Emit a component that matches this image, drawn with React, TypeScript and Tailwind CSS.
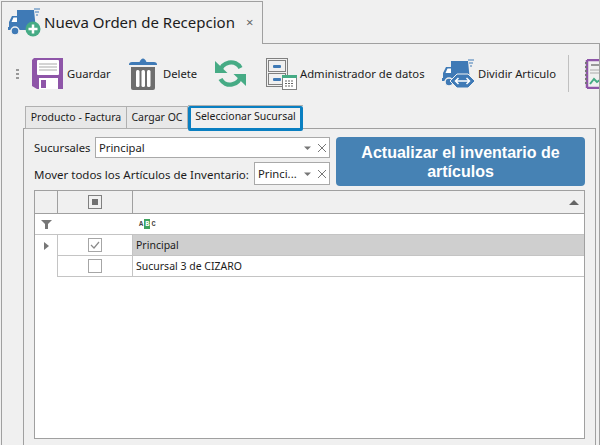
import { ReactNode } from "react";

const BLUE = "#3f7ab6";
const GREEN = "#46ab85";
const PURPLE = "#8e55a8";
const GREY = "#6e6e6e";

function TruckBody() {
  return (
    <>
      <path d="M9 3h17l2 20H1v-8l3-6h5z" fill={BLUE} />
      <path d="M3.500 15l2-4.500h3.500V15z" fill="#fff" />
      <rect x="0" y="20" width="27" height="3" fill={BLUE} />
      <circle cx="7" cy="24" r="4" fill={BLUE} stroke="#f0f0f0" strokeWidth="1.500" />
      <path d="M26 2h6M27 5h4M28 8h2" stroke={BLUE} strokeWidth="1" />
    </>
  );
}

function NewOrderIcon() {
  return (
    <svg width="33" height="30" viewBox="0 0 33 30" className="shrink-0">
      <TruckBody />
      <circle cx="25" cy="22" r="7.500" fill={GREEN} />
      <path d="M25 17.500v9M20.500 22h9" stroke="#fff" strokeWidth="2.500" />
    </svg>
  );
}

function SaveIcon() {
  return (
    <svg width="31" height="31" viewBox="0 0 31 31" className="shrink-0">
      <path d="M2 0h29v31H5l-5-3V2z" fill={PURPLE} />
      <rect x="5" y="2" width="22" height="15" rx="1" fill="#fff" />
      <path d="M7 6h18M7 9h18M7 12h18" stroke="#a9a9a9" strokeWidth="1" />
      <rect x="7" y="20" width="19" height="11" fill="#fff" />
      <rect x="9" y="22" width="5" height="8" fill={PURPLE} />
    </svg>
  );
}

function TrashIcon() {
  return (
    <svg width="28" height="32" viewBox="0 0 28 32" className="shrink-0">
      <path d="M0 6.500Q0 4 3 4h7.500Q12 0.500 14 0.500T17.500 4H25q3 0 3 2.500V7H0z" fill={BLUE} />
      <path d="M2 9h24v21q0 2-2 2H4q-2 0-2-2z" fill={GREY} />
      <rect x="7" y="12" width="3.500" height="17" rx="1.500" fill="#fff" />
      <rect x="12.500" y="12" width="3.500" height="17" rx="1.500" fill="#fff" />
      <rect x="18" y="12" width="3.500" height="17" rx="1.500" fill="#fff" />
    </svg>
  );
}

function RefreshIcon() {
  return (
    <svg width="31" height="29" viewBox="0 0 31 29" className="shrink-0">
      <path d="M5 13A11 11 0 0 1 25.500 9" fill="none" stroke={GREEN} strokeWidth="4.500" />
      <path d="M26 16A11 11 0 0 1 5.500 20" fill="none" stroke={GREEN} strokeWidth="4.500" />
      <path d="M0 14V2l12.500 12z" fill={GREEN} />
      <path d="M31 15v12L18.500 15z" fill={GREEN} />
    </svg>
  );
}

function DataAdminIcon() {
  return (
    <svg width="31" height="32" viewBox="0 0 31 32" className="shrink-0">
      <rect x="0.500" y="0.500" width="21" height="28" fill="#f0f0f0" stroke="#808080" />
      <rect x="2.500" y="2.500" width="17" height="11" fill="none" stroke="#808080" />
      <rect x="2.500" y="15.500" width="17" height="11" fill="none" stroke="#808080" />
      <rect x="7" y="7" width="8" height="3" rx="1" fill={BLUE} />
      <rect x="7" y="20" width="8" height="3" rx="1" fill={BLUE} />
      <rect x="16.500" y="17.500" width="14" height="14" fill="#fff" stroke="#808080" />
      <rect x="16" y="17" width="15" height="3" fill={GREEN} />
      <path d="M19 23h9M19 25.500h9M19 28h9" stroke="#666" strokeWidth="1.200" strokeDasharray="2 1" />
    </svg>
  );
}

function SplitTruckIcon() {
  return (
    <svg width="33" height="31" viewBox="0 0 33 31" className="shrink-0">
      <TruckBody />
      <path d="M8 23l7-7h11l7 7-7 7H15z" fill={BLUE} stroke="#f0f0f0" />
      <path d="M14 23h13M16.500 20l-3 3 3 3M24.500 20l3 3-3 3" fill="none" stroke="#fff" strokeWidth="1.500" />
    </svg>
  );
}

function ReportIcon() {
  return (
    <svg width="15" height="30" viewBox="0 0 15 30" className="shrink-0">
      <path d="M2 1h13M2 1v28M2 29h13" fill="none" stroke={PURPLE} strokeWidth="2.500" />
      <path d="M0 4h2M0 8h2M0 12h2M0 16h2M0 20h2M0 24h2" stroke="#777" strokeWidth="2" />
      <path d="M6 6h9" stroke="#999" strokeWidth="2" />
      <path d="M5 11h10M5 14h10" stroke="#aaa" strokeWidth="1" />
      <path d="M5 25l4-5 3 3 3-2" fill="none" stroke={GREEN} strokeWidth="2" />
    </svg>
  );
}

function ToolButton({ icon, label, className }: { icon: ReactNode; label?: string; className: string }) {
  return (
    <div className={`flex shrink-0 items-center ${className}`}>
      {icon}
      {label && <span className="pt-[2px] whitespace-nowrap text-[11.25px] text-[#1c1c1c]">{label}</span>}
    </div>
  );
}

function ComboBox({ value, className }: { value: string; className: string }) {
  return (
    <div className={`flex items-center border border-[#a9a9a9] bg-white pr-px pl-[3px] text-[11.25px] ${className}`}>
      <span className="min-w-0 flex-1 truncate pt-[2px]">{value}</span>
      <svg width="26" height="12" viewBox="0 0 26 12" className="shrink-0">
        <path d="M2 4.500h7L5.500 8z" fill="#777" />
        <path d="M16 2l8 8M24 2l-8 8" stroke="#777" strokeWidth="1" />
      </svg>
    </div>
  );
}

function CheckBox({ checked }: { checked?: boolean }) {
  return (
    <div className="flex h-[14px] w-[14px] items-center justify-center border border-[#a6a6a6] bg-white">
      {checked && (
        <svg width="10" height="10" viewBox="0 0 10 10">
          <path d="M1 5l3 3 5-6" fill="none" stroke="#8a8a8a" strokeWidth="1.200" />
        </svg>
      )}
    </div>
  );
}

function GridRow({ name, checked, selected }: { name: string; checked?: boolean; selected?: boolean }) {
  return (
    <div className="flex h-[21px]">
      <div className="flex w-[22px] shrink-0 items-center justify-center">
        {selected && (
          <svg width="5" height="8" viewBox="0 0 5 8">
            <path d="M0 0l5 4-5 4z" fill="#777" />
          </svg>
        )}
      </div>
      <div className="flex w-[76px] shrink-0 items-center justify-center border-r border-b border-l border-[#c4c4c4]">
        <CheckBox checked={checked} />
      </div>
      <div
        className={`flex flex-1 items-center border-b border-[#c4c4c4] pt-[2px] pl-[3px] text-[10.5px] ${
          selected ? "bg-[#cfcfcf]" : ""
        }`}
      >
        {name}
      </div>
    </div>
  );
}

export default function App() {
  return (
    <div
      className="flex h-[445px] w-[600px] flex-col overflow-hidden bg-[#f0f0f0] text-[#1c1c1c]"
      style={{ fontFamily: '"Noto Sans", sans-serif' }}
    >
      {/* document tab */}
      <div className="flex h-[44px] shrink-0 pt-px">
        <div className="ml-px flex w-[262px] shrink-0 items-center border-t border-r border-l border-[#a0a0a0] pb-[3px] pl-[6px]">
          <NewOrderIcon />
          <span className="ml-[3px] pt-[2px] whitespace-nowrap text-[15px]">Nueva Orden de Recepcion</span>
          <span className="ml-[11px] pt-[3px] text-[13px] text-[#666]">×</span>
        </div>
        <div className="flex-1 border-b border-[#a0a0a0]" />
      </div>

      <div className="ml-px flex min-h-0 flex-1 flex-col border-r border-l border-[#a0a0a0]">
        {/* toolbar */}
        <div className="flex h-[61px] shrink-0 items-center overflow-hidden pb-[2px]">
          <div className="mr-[13px] ml-[14px] flex w-[3px] shrink-0 flex-col gap-[2px]">
            <div className="h-[2px] bg-[#999]" />
            <div className="h-[2px] bg-[#999]" />
            <div className="h-[2px] bg-[#999]" />
          </div>
          <ToolButton icon={<SaveIcon />} label="Guardar" className="w-[97px] gap-[4px]" />
          <ToolButton icon={<TrashIcon />} label="Delete" className="w-[86px] gap-[6px]" />
          <ToolButton icon={<RefreshIcon />} className="w-[51px]" />
          <ToolButton icon={<DataAdminIcon />} label="Administrador de datos" className="w-[176px] gap-[3px]" />
          <ToolButton icon={<SplitTruckIcon />} label="Dividir Articulo" className="w-[126px] gap-[3px]" />
          <div className="mr-4 h-[37px] w-px shrink-0 bg-[#c0c0c0]" />
          <ReportIcon />
        </div>

        {/* inner tabs */}
        <div className="relative z-10 -mb-[3px] flex h-[26px] shrink-0 items-start pl-[23px] text-[10.5px] whitespace-nowrap">
          <div className="mt-px flex h-[23px] w-[102px] items-center justify-center border border-[#b0b0b0] bg-[#e8e8e8]">
            Producto - Factura
          </div>
          <div className="mt-px flex h-[23px] w-[61px] items-center justify-center border-t border-r border-b border-[#b0b0b0] bg-[#e8e8e8]">
            Cargar OC
          </div>
          <div className="h-[26px] w-[115px] border-t border-[#b0b0b0]">
            <div className="flex h-[25px] justify-center rounded-[2px] border-[3px] border-t-2 border-[#0a7fc1] bg-[#f0f0f0] leading-[17px]">
              Seleccionar Sucursal
            </div>
          </div>
        </div>

        {/* tab page */}
        <div className="mr-[3px] ml-[21px] flex min-h-0 flex-1 flex-col border-t border-r border-l border-[#a0a0a0] pt-2 pr-[10px] pb-[6px] pl-[10px]">
          <div className="flex shrink-0 gap-[6px]">
            <div className="flex w-[296px] shrink-0 flex-col gap-1 text-[11.25px]">
              <div className="flex h-[21px] items-center">
                <span className="w-[61px] shrink-0 pt-[2px] whitespace-nowrap">Sucursales</span>
                <ComboBox value="Principal" className="h-[21px] flex-1" />
              </div>
              <div className="flex h-[23px] items-center">
                <span className="w-[220px] shrink-0 pt-[2px] text-[11.5px] whitespace-nowrap">
                  Mover todos los Artículos de Inventario:
                </span>
                <ComboBox value="Princi..." className="h-[23px] flex-1" />
              </div>
            </div>
            <button
              className="flex h-[49px] flex-1 items-center justify-center rounded-[4px] bg-[#4682b4] px-4 text-center text-[16px] leading-[19px] font-bold text-white"
              style={{ fontFamily: '"Liberation Sans", sans-serif' }}
            >
              Actualizar el inventario de artículos
            </button>
          </div>

          {/* grid */}
          <div className="mt-1 flex min-h-0 flex-1 flex-col border border-[#a0a0a0] bg-white">
            <div className="flex h-[23px] shrink-0 border-b border-[#a0a0a0] bg-[#f0f0f0]">
              <div className="w-[22px] shrink-0" />
              <div className="flex w-[76px] shrink-0 items-center justify-center border-r border-l border-[#a0a0a0]">
                <div className="flex h-[14px] w-[14px] items-center justify-center border border-[#808080]">
                  <div className="h-[6px] w-[6px] bg-[#707070]" />
                </div>
              </div>
              <div className="flex flex-1 items-center justify-end pr-[5px]">
                <svg width="10" height="5" viewBox="0 0 10 5">
                  <path d="M0 5l5-5 5 5z" fill="#666" />
                </svg>
              </div>
            </div>
            <div className="flex h-[21px] shrink-0 border-b border-[#c4c4c4]">
              <div className="flex w-[22px] shrink-0 items-center justify-center">
                <svg width="11" height="9" viewBox="0 0 11 9">
                  <path d="M0 0h11L7 4v5H4V4z" fill="#777" />
                </svg>
              </div>
              <div className="w-[77px] shrink-0" />
              <div
                className="ml-[4px] flex items-center text-[7px] leading-[10px] font-bold text-[#444]"
                style={{ fontFamily: '"Liberation Mono", monospace' }}
              >
                <span className="px-[1px]">A</span>
                <span className="bg-[#3fa35f] px-[1px] text-white">B</span>
                <span className="px-[1px]">C</span>
              </div>
            </div>
            <GridRow name="Principal" checked selected />
            <GridRow name="Sucursal 3 de CIZARO" />
          </div>
        </div>
      </div>
    </div>
  );
}
